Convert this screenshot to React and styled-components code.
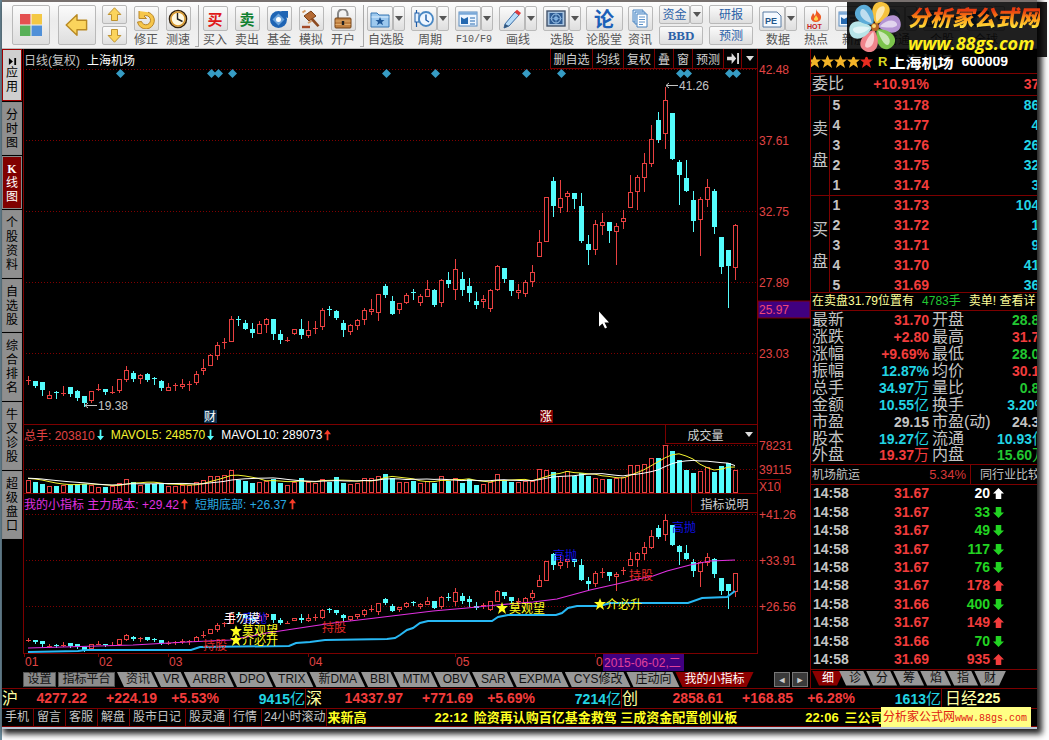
import React from 'react';
import styled, { createGlobalStyle } from 'styled-components';

//
// Global
//

const GlobalStyle = createGlobalStyle`
  * {
    box-sizing: border-box;
  }
  body {
    margin: 0;
    background: #fff;
    font-family: 'Liberation Sans', 'Noto Sans CJK SC', sans-serif;
    font-size: 12px;
  }
  button {
    font: inherit;
    padding: 0;
    margin: 0;
    border: 0;
    white-space: nowrap;
  }
  table {
    border-collapse: collapse;
    table-layout: fixed;
  }
  td, th {
    padding: 0;
    font-weight: normal;
    text-align: left;
    white-space: nowrap;
  }
`;

const line = '#7c0000';
const red = '#f23c3c';
const cyan = '#54fcfc';
const aqua = '#22d4e4';
const green = '#22c832';
const grey = '#c4c4c4';

const Page = styled.div`
  position: relative;
  padding: 0 12px 13px 2px;
  background: linear-gradient(to right, #6d8fa0 0, #6d8fa0 2px, #fff 2px);
  overflow: hidden;
`;

const Frame = styled.div`
  background: #000;
  border-bottom: 2px solid #b9c6d6;
  box-shadow: 3px 3px 6px 2px #222;
`;

// Toolbar

const Toolbar = styled.header`
  display: flex;
  align-items: flex-start;
  height: 49px;
  padding-left: 4px;
  overflow: hidden;
  border-top: 2px solid #77706e;
  border-bottom: 1px solid #bbb;
  background: linear-gradient(#fdfdfd, #ececec 40%, #f1f1f1);
`;

const Grip = styled.span`
  flex: none;
  width: 4px;
  height: 42px;
  margin: 3px 0 0 1px;
  border: 1px solid #aaa;
  border-width: 0 1px 1px 0;
`;

const Tool = styled.div`
  flex: none;
  display: flex;
  flex-direction: column;
  align-items: center;
  width: ${(p) => p.$w || 32}px;
  padding-top: 4px;
  color: #555;
  line-height: 16px;
  white-space: nowrap;
`;

const Face = styled.button`
  display: flex;
  align-items: center;
  justify-content: center;
  flex: none;
  width: ${(p) => p.$w || 25}px;
  height: ${(p) => p.$h || 25}px;
  border: 1px solid #b9b9b9;
  border-radius: 2px;
  background: linear-gradient(#fbfbfb, #dedede);
  color: #2c62a8;
  line-height: 16px;
`;

const Split = styled.span`
  display: flex;
  margin-bottom: 1px;
`;

const Stack = styled.div`
  flex: none;
  display: flex;
  flex-direction: column;
  align-items: center;
  gap: 2px;
  width: ${(p) => p.$w}px;
  padding-top: 3px;
  ${Split} {
    margin: 0;
  }
`;

const Bbd = styled.b`
  font-family: 'Liberation Serif', serif;
  font-size: 13px;
`;

const Stamp = styled.b`
  font-size: ${(p) => p.$s || 15}px;
  font-family: 'Noto Sans CJK SC', sans-serif;
  color: ${(p) => p.$c};
`;

const Mono = styled.span`
  font-family: 'Liberation Mono', monospace;
  font-size: 10px;
`;

// Body

const Body = styled.div`
  display: flex;
`;

const Side = styled.nav`
  flex: none;
  width: 21px;
  display: flex;
  flex-direction: column;
  gap: 1px;
  padding: 0 1px 0 0;
`;

const SideTab = styled.button`
  display: flex;
  flex-direction: column;
  align-items: center;
  justify-content: center;
  height: ${(p) => p.$h}px;
  border: 1px solid ${(p) => (p.$first ? '#a00000' : '#8a8a8a')};
  background: ${(p) => (p.$on ? '#800000' : p.$first ? '#cfcfcf' : '#8f8f8f')};
  color: ${(p) => (p.$on ? '#fff' : '#000')};
  line-height: 14px;
  b {
    font-family: 'Liberation Serif', serif;
  }
`;

const Charts = styled.main`
  flex: 1;
  min-width: 0;
  background: #000;
  > svg {
    display: block;
    width: 100%;
    height: auto;
    overflow: visible;
  }
`;

const Head = styled.div`
  display: flex;
  align-items: center;
  height: 20px;
  margin-right: 52px;
  border: 1px solid ${line};
  border-width: ${(p) => (p.$top ? '1px 1px 0 1px' : '0 1px 0 1px')};
  white-space: nowrap;
  color: ${grey};
`;

const Legend = styled.span`
  display: flex;
  align-items: center;
  gap: 2px;
  margin-right: 7px;
  color: ${(p) => p.$c};
`;

const HeadTools = styled.div`
  display: flex;
  align-self: stretch;
  margin-left: auto;
`;

const HeadButton = styled.button`
  display: flex;
  align-items: center;
  justify-content: center;
  width: ${(p) => p.$w}px;
  background: #000;
  border: 1px solid ${line};
  border-width: 0 0 1px 1px;
  color: #d0d0d0;
  span {
    flex: 1;
  }
  span + svg {
    margin-right: 4px;
  }
`;

// Tabs

const Tabs = styled.div`
  display: flex;
  height: 17px;
  align-items: flex-start;
  padding: 1px 0 0 ${(p) => p.$pad || 0}px;
  overflow: hidden;
`;

const FlatTab = styled.button`
  height: 15px;
  width: ${(p) => p.$w}px;
  margin-right: 2px;
  border: 1px solid #555;
  background: #8c8c8c;
  color: #111;
  line-height: 13px;
`;

const SlantTab = styled.button`
  flex: none;
  height: 15px;
  padding: 0 ${(p) => p.$pad || 9}px;
  margin-right: -5px;
  line-height: 15px;
  background: ${(p) => (p.$on ? '#8c0000' : '#989898')};
  color: ${(p) => (p.$on ? '#fff' : '#111')};
  clip-path: ${(p) => (p.$end
    ? 'polygon(0 0, 100% 0, calc(100% - 7px) 100%, 7px 100%)'
    : 'polygon(0 0, calc(100% - 8px) 0, calc(100% - 1px) 100%, 7px 100%)')};
`;

const Scroll = styled.div`
  display: flex;
  gap: 2px;
  margin-left: auto;
  padding-right: 2px;
`;

const ScrollButton = styled.button`
  width: 16px;
  height: 15px;
  border: 1px solid #777;
  background: #3a3a3a;
  color: #ccc;
  font-size: 9px;
  line-height: 12px;
`;

// Quote panel

const Quote = styled.aside`
  flex: none;
  width: 227px;
  overflow: hidden;
  border-left: 1px solid ${line};
`;

const Title = styled.h1`
  display: flex;
  align-items: center;
  height: 25px;
  margin: 0 0 0 -3px;
  border-bottom: 1px solid ${line};
  color: #fff;
  font-size: 16px;
  white-space: nowrap;
  em {
    margin: 0 2px 0 5px;
    font-size: 13px;
    font-style: normal;
    color: #d8d820;
  }
  span {
    margin-left: 8px;
    font-size: 14px;
  }
`;

const Table = styled.table`
  width: 236px;
  color: ${grey};
  font-size: 16px;
  border-bottom: 1px solid ${line};
  height: ${(p) => (p.$h ? `${p.$h}px` : 'auto')};
  td, th {
    height: ${(p) => p.$row}px;
    line-height: ${(p) => p.$row - 1}px;
  }
`;

const Num = styled.td`
  && {
    text-align: ${(p) => (p.$left ? 'left' : 'right')};
  }
  padding-left: ${(p) => p.$left || 0}px;
  font-size: 14px;
  font-weight: bold;
  color: ${(p) => p.$c || grey};
  span {
    font-size: 15px;
    font-weight: normal;
  }
`;

const SideCell = styled.th`
  border-right: 1px solid ${line};
  vertical-align: middle;
  span {
    display: block;
    height: 32px;
    line-height: 32px;
    padding-left: 1px;
  }
`;

const Group = styled.tbody`
  border-bottom: 1px solid ${line};
`;

const Label = styled.th`
  && {
    padding-left: ${(p) => p.$pad || 1}px;
  }
`;

const Alert = styled.p`
  position: relative;
  display: flex;
  gap: 8px;
  height: 19px;
  margin: -4px 0 0;
  padding-left: 1px;
  border: 1px solid ${line};
  border-width: 1px 0;
  background: #000;
  color: #ffff9a;
  line-height: 17px;
  white-space: nowrap;
  b {
    font-weight: normal;
    color: ${green};
  }
`;

const Sector = styled.div`
  display: flex;
  height: 20px;
  padding-left: 1px;
  border-bottom: 1px solid ${line};
  color: ${grey};
  line-height: 20px;
  white-space: nowrap;
  b {
    margin-left: auto;
    padding-right: 4px;
    font-size: 13px;
    font-weight: normal;
    color: #d83838;
  }
`;

const Peer = styled.a`
  width: 67px;
  padding-left: 9px;
  border-left: 1px solid ${line};
  color: ${grey};
  text-decoration: none;
`;

// Bottom bars

const Indices = styled.div`
  display: grid;
  grid-template-columns: 304fr 316fr 320fr 95fr;
  height: 21px;
  border: 1px solid ${line};
  border-width: 1px 0;
`;

const Index = styled.div`
  display: flex;
  border-right: 1px solid ${line};
  color: ${red};
  font-size: 14px;
  font-weight: bold;
  line-height: 19px;
  text-align: right;
  white-space: nowrap;
  overflow: hidden;
  &:last-child {
    border: 0;
    padding-left: 3px;
    color: #ffffa0;
  }
`;

const IndexName = styled.span`
  color: #ffffa0;
  font-size: 16px;
  font-weight: normal;
`;

const Cell = styled.span`
  flex: ${(p) => (p.$w ? 'none' : 1)};
  width: ${(p) => (p.$w ? `${p.$w}px` : 'auto')};
  color: ${(p) => p.$c || red};
  i {
    font-size: 15px;
    font-style: normal;
    font-weight: normal;
  }
`;

const News = styled.div`
  display: flex;
  height: 18px;
  border-bottom: 1px solid ${line};
  overflow: hidden;
`;

const Link = styled.a`
  flex: none;
  padding: 0 4px 0 3px;
  border-right: 1px solid ${line};
  color: ${grey};
  line-height: 17px;
  text-decoration: none;
  white-space: nowrap;
  &:last-of-type {
    padding: 0 1px 0 2px;
  }
`;

const Ticker = styled.div`
  display: flex;
  gap: 68px;
  color: #ffff20;
  font-size: 13px;
  font-weight: bold;
  line-height: 17px;
  white-space: nowrap;
  time {
    margin-right: 6px;
  }
`;

// Floating over the window

const Watermark = styled.div`
  position: absolute;
  top: 2px;
  right: 2px;
  display: flex;
  width: 200px;
  height: 55px;
  background: rgba(0, 0, 0, 0.87);
  svg {
    flex: none;
  }
`;

const Brand = styled.div`
  display: flex;
  flex-direction: column;
  padding: 3px 0 0 5px;
  font-style: italic;
  font-weight: bold;
  white-space: nowrap;
  strong {
    font-size: 22px;
    line-height: 28px;
    background: linear-gradient(#e83c10 20%, #ff9a18 50%, #ffe23c 80%);
    background-clip: text;
    color: transparent;
  }
  span {
    font-family: 'Open Sans', sans-serif;
    font-size: 18px;
    line-height: 20px;
    color: #fff01c;
  }
`;

const Promo = styled.a`
  position: absolute;
  right: 18px;
  bottom: 15px;
  width: 150px;
  height: 20px;
  padding-left: 2px;
  background: #ffff84;
  color: #e02010;
  font-size: 12px;
  line-height: 20px;
  text-decoration: none;
  white-space: nowrap;
`;

// Data

// up, high, body top, body bottom, low, volume
const candles = [
  [1, 376, 380, 380, 384, 12], [0, 381, 381, 386, 387, 11], [0, 382, 382, 390, 395, 9],
  [1, 391, 395, 398, 398, 6], [0, 391, 392, 393, 398, 7], [1, 386, 393, 393, 395, 7],
  [0, 387, 387, 394, 396, 8], [0, 390, 391, 398, 400, 9], [0, 396, 396, 403, 406, 9],
  [1, 391, 391, 400, 402, 7], [1, 384, 389, 389, 390, 5], [0, 389, 389, 392, 394, 6],
  [1, 386, 392, 392, 393, 6], [1, 379, 379, 390, 392, 9], [1, 366, 370, 379, 381, 13],
  [0, 371, 373, 379, 381, 11], [1, 374, 375, 378, 383, 7], [0, 373, 374, 380, 381, 9],
  [0, 377, 378, 379, 384, 9], [0, 380, 381, 388, 390, 9], [1, 383, 387, 390, 390, 6],
  [1, 383, 385, 385, 390, 6], [1, 379, 384, 386, 388, 7], [1, 381, 384, 384, 390, 7],
  [1, 371, 374, 382, 384, 10], [1, 359, 368, 370, 374, 12], [1, 354, 355, 365, 365, 16],
  [1, 342, 345, 355, 359, 16], [1, 338, 342, 342, 348, 17], [1, 316, 319, 341, 341, 22],
  [0, 316, 319, 320, 325, 13], [0, 320, 323, 329, 329, 12], [0, 323, 329, 333, 337, 10],
  [1, 321, 324, 333, 333, 10], [1, 318, 319, 324, 332, 11], [0, 319, 319, 334, 339, 14],
  [0, 330, 334, 340, 343, 10], [1, 337, 340, 340, 341, 7], [1, 329, 329, 333, 334, 10],
  [0, 319, 329, 335, 338, 15], [1, 321, 330, 335, 337, 10], [1, 321, 328, 328, 333, 9],
  [1, 308, 310, 326, 329, 13], [0, 306, 309, 310, 315, 11], [0, 310, 311, 318, 319, 16],
  [0, 320, 323, 330, 336, 10], [1, 324, 325, 331, 334, 8], [1, 319, 320, 325, 329, 9],
  [1, 308, 310, 319, 324, 14], [1, 299, 309, 311, 314, 14], [1, 294, 294, 312, 320, 16],
  [0, 284, 286, 295, 297, 19], [0, 296, 301, 314, 314, 15], [1, 303, 303, 309, 313, 10],
  [1, 293, 295, 302, 303, 10], [0, 289, 292, 293, 299, 12], [1, 294, 296, 302, 305, 9],
  [1, 280, 289, 296, 296, 11], [0, 289, 290, 305, 306, 10], [1, 279, 280, 302, 306, 16],
  [0, 272, 280, 284, 287, 12], [1, 259, 269, 289, 299, 14], [0, 272, 279, 290, 295, 10],
  [0, 278, 286, 293, 301, 14], [0, 292, 301, 305, 308, 8], [1, 295, 299, 301, 307, 8],
  [1, 289, 290, 308, 311, 10], [1, 265, 266, 289, 290, 18], [0, 268, 268, 279, 282, 13],
  [0, 280, 280, 291, 295, 11], [1, 284, 290, 292, 298, 10], [1, 280, 282, 293, 296, 11],
  [1, 265, 272, 281, 286, 11], [1, 230, 242, 256, 256, 23], [1, 197, 197, 241, 241, 22],
  [0, 177, 181, 206, 216, 21], [1, 180, 198, 207, 212, 16], [1, 191, 193, 196, 211, 21],
  [0, 193, 193, 199, 208, 17], [0, 193, 206, 241, 242, 20], [0, 235, 244, 250, 264, 17],
  [1, 220, 224, 249, 254, 14], [1, 213, 222, 225, 234, 13], [0, 222, 222, 231, 242, 14],
  [1, 223, 226, 231, 264, 14], [1, 210, 218, 221, 228, 15], [1, 175, 192, 207, 207, 27],
  [1, 175, 177, 191, 209, 27], [1, 153, 163, 177, 191, 28], [1, 125, 139, 163, 166, 34],
  [0, 112, 120, 140, 142, 35], [1, 87, 100, 133, 148, 47], [0, 113, 113, 159, 159, 42],
  [0, 160, 162, 175, 204, 33], [0, 160, 178, 191, 191, 23], [0, 191, 200, 221, 231, 20],
  [1, 197, 199, 219, 255, 21], [1, 179, 187, 199, 206, 25], [0, 189, 191, 227, 233, 21],
  [0, 237, 237, 267, 273, 27], [0, 250, 250, 266, 307, 30], [1, 224, 225, 267, 279, 22],
];

const events = [120, 211, 218, 232, 386, 435, 526, 561, 680, 687, 729, 736];

const sideTabs = [
  ['分时图', 53], ['K线图', 53], ['个股资料', 68], ['自选股', 53],
  ['综合排名', 68], ['牛叉诊股', 68], ['超级盘口', 68],
];

const sells = [['5', '31.78', '865'], ['4', '31.77', '41'], ['3', '31.76', '262'], ['2', '31.75', '325'], ['1', '31.74', '35']];
const buys = [['1', '31.73', '1042'], ['2', '31.72', '15'], ['3', '31.71', '95'], ['4', '31.70', '412'], ['5', '31.69', '365']];

const stats = [
  ['最新', '31.70', '', red, '开盘', '28.80', '', green],
  ['涨跌', '+2.80', '', red, '最高', '31.79', '', red],
  ['涨幅', '+9.69%', '', red, '最低', '28.00', '', green],
  ['振幅', '12.87%', '', aqua, '均价', '30.17', '', red],
  ['总手', '34.97', '万', aqua, '量比', '0.86', '', green],
  ['金额', '10.55', '亿', aqua, '换手', '3.20%', '', aqua],
  ['市盈', '29.15', '', grey, '市盈(动)', '24.35', '', grey],
  ['股本', '19.27', '亿', aqua, '流通', '10.93', '亿', aqua],
  ['外盘', '19.37', '万', red, '内盘', '15.60', '万', green],
];

const ticks = [
  ['31.67', 20, 'even'], ['31.67', 33, 'down'], ['31.67', 49, 'down'], ['31.67', 117, 'down'],
  ['31.67', 76, 'down'], ['31.67', 178, 'up'], ['31.66', 400, 'down'], ['31.67', 149, 'up'],
  ['31.66', 70, 'down'], ['31.69', 935, 'up'],
];
const tickColor = { even: '#fff', down: '#22d422', up: red };

const indicators = ['资讯', 'VR', 'ARBR', 'DPO', 'TRIX', '新DMA', 'BBI', 'MTM', 'OBV', 'SAR', 'EXPMA', 'CYS修改', '庄动向'];

const indices = [
  ['沪', '4277.22', '+224.19', '+5.53%', '9415'],
  ['深', '14337.97', '+771.69', '+5.69%', '7214'],
  ['创', '2858.61', '+168.85', '+6.28%', '1613'],
];

const links = ['手机', '留言', '客服', '解盘', '股市日记', '股灵通', '行情', '24小时滚动'];

// Icons

const Svg = ({ s = 20, children, ...rest }) => (
  <svg width={s} height={s} viewBox="0 0 20 20" aria-hidden="true" {...rest}>{children}</svg>
);

const Caret = ({ c = '#555' }) => (
  <svg width="8" height="5" viewBox="0 0 8 5" aria-hidden="true"><path d="M0 0h8L4 5z" fill={c} /></svg>
);

const Thin = ({ up, c }) => (
  <svg width="7" height="12" viewBox="0 0 8 12" aria-hidden="true">
    <path d={up ? 'M4 0L8 5H5V12H3V5H0z' : 'M4 12L8 7H5V0H3V7H0z'} fill={c} />
  </svg>
);

const GoldArrow = ({ turn, s }) => (
  <Svg s={s}>
    <path transform={`rotate(${turn} 10 10)`} d="M10 1L18.500 10H14V18H6V10H1.500z" fill="#fbd45c" stroke="#b98a24" strokeWidth="1.200" strokeLinejoin="round" />
  </Svg>
);

const icons = {
  fix: <><path d="M3 2v7.500h7.500L8 7a4.600 4.600 0 1 1-2.500 5.500L1.500 13A8.500 8.500 0 1 0 12 3.200" fill="#f6c64a" stroke="#b8862a" strokeLinejoin="round" /></>,
  clock: <><circle cx="10" cy="10" r="8.500" fill="#fff8e0" stroke="#33210c" strokeWidth="1.600" /><circle cx="10" cy="10" r="7" fill="none" stroke="#d8982c" strokeWidth="1.500" /><path d="M9.500 4v6l5 2.500" fill="none" stroke="#222" strokeWidth="1.400" /></>,
  fund: <><circle cx="9.500" cy="10.500" r="8.500" fill="#1e64b4" /><path d="M12 2h7v7l-3-1z" fill="#1e64b4" /><path d="M9.500 4.500l3 3 3 3-6 6-6-6z" fill="#6ca4dc" /><circle cx="9.500" cy="10.500" r="2.500" fill="#fff" /></>,
  gavel: <><path d="M3 7l7-5 5 5-7 5z" fill="#b46a34" stroke="#7a4018" /><path d="M11.500 8.500l7 8-2 1.500-7-7.500z" fill="#8c4a20" /><path d="M1.500 3.500l3-2M7 14l3.500-2" stroke="#d49a64" strokeWidth="2" /><path d="M1 18h8" stroke="#a44a28" strokeWidth="2.400" /></>,
  lock: <><path d="M5 10V5.500a4.500 4.500 0 0 1 9.500-1V7" fill="none" stroke="#888" strokeWidth="2" /><rect x="2" y="9" width="16" height="10" rx="1" fill="#c08040" stroke="#74441a" /><path d="M2.500 12h15M2.500 15.500h15" stroke="#e0ac6c" /><path d="M10 12v4" stroke="#222" strokeWidth="2.400" /></>,
  folder: <><path d="M1 4h6l2 2h10v12H1z" fill="#9cc8ee" stroke="#3a78b4" /><path d="M1.500 8h17" stroke="#dff0ff" /><path d="M10 8l1.300 3h3.200l-2.500 2 1 3.200-3-1.900-3 1.900 1-3.200-2.500-2h3.200z" fill="#205898" /></>,
  period: <><path d="M2.500 1v17" stroke="#1c5ca8" strokeWidth="1.200" /><rect x="1" y="4" width="4" height="9" fill="#e4f2ff" stroke="#1c5ca8" /><circle cx="12" cy="10" r="7" fill="#eef6ff" stroke="#4a88c4" strokeWidth="1.800" /><path d="M12 5.500V11l3 2" fill="none" stroke="#1c5ca8" strokeWidth="1.400" /></>,
  info: <><rect x="1" y="3" width="18" height="14" fill="#eef6ff" stroke="#5a8cc0" /><path d="M1 4.500h18" stroke="#7aa8d8" strokeWidth="2.500" /><path d="M3 8l3 2 4-2v7H3z" fill="#2468b0" /><path d="M12 9h5M12 12h5M12 15h5" stroke="#2468b0" strokeWidth="1.200" /></>,
  pen: <><path d="M3 15L13 3l4 3L7 17l-5 2z" fill="#b8dcf8" stroke="#3a6ca4" strokeLinejoin="round" /><path d="M12.500 3L15 .8 19 4l-2 2.500z" fill="#e03a3a" /><path d="M2 19l1-4 4 2z" fill="#33567c" /></>,
  pick: <><rect x="1" y="2" width="18" height="15" fill="#a8c4e0" stroke="#44546c" strokeWidth="1.400" /><rect x="3.500" y="4" width="13" height="11" fill="#2e5c94" /><circle cx="10" cy="9.500" r="4.500" fill="none" stroke="#a8d0f4" /><circle cx="10" cy="9.500" r="2" fill="#8cc0f0" /><path d="M10 4v11M3.500 9.500h13" stroke="#7ca8d4" strokeWidth=".7" /></>,
  docs: <><path d="M3 1h10v12H3z" fill="#d8eafb" stroke="#4a84c0" /><path d="M5 3h10v12H5z" fill="#d8eafb" stroke="#4a84c0" /><path d="M7 5h10v13H7z" fill="#fff" stroke="#4a84c0" /><path d="M9 8h6M9 10.500h6M9 13h6M9 15.500h4" stroke="#5a90c8" /></>,
  hot: <><path d="M10 0c1 4 6 5 5 9-.4 2.500-2.500 4-5 4s-5-1.500-5-4c0-2 1.500-3 2-5 1 1 1.500 2 1.500 3C10 5 10.500 2.500 10 0z" fill="#ee5a24" /><path d="M10 6c.5 2 2.500 2.500 2 4.500-.3 1.500-3.700 1.500-4 0C7.700 9 9.500 8 10 6z" fill="#ffd34c" /></>,
};

const ToolButton = ({ label, icon, w, split, mono, children }) => (
  <Tool $w={w || (split ? 44 : 32)}>
    <Split>
      <Face $w={split ? 26 : w ? w - 3 : 25} aria-label={label}>{children || <Svg>{icons[icon]}</Svg>}</Face>
      {split && <Face $w={12} aria-label={`${label} ▾`}><Caret /></Face>}
    </Split>
    {mono ? <Mono>{label}</Mono> : label}
  </Tool>
);

const Star = ({ c = '#f4b428' }) => (
  <Svg s={13}><path d="M10 0l3 7h7l-5.500 4.500L17 20l-7-5-7 5 2.500-8.500L0 7h7z" fill={c} /></Svg>
);

// Charts

const Candles = ({ map = (y) => y }) => (
  <g shapeRendering="crispEdges">
    {candles.map(([up, hi, top, bot, lo], i) => {
      const x = 28 + i * 7;
      const c = up ? '#e84040' : cyan;
      const [h, t, b, l] = [hi, top, bot, lo].map((y) => Math.round(map(y)));
      return (
        <g key={x} fill={c}>
          <rect x={x} y={h} width="1" height={Math.max(t - h, 0)} />
          <rect x={x} y={b} width="1" height={Math.max(l - b, 0) + 1} />
          {up && b - t > 1
            ? <rect x={x - 1.5} y={t + 0.5} width="4" height={b - t} fill="#000" stroke={c} />
            : <rect x={x - 2} y={t} width="5" height={Math.max(b - t, 1)} />}
        </g>
      );
    })}
  </g>
);

const Grid = ({ rows }) => rows.map(([y, text]) => (
  <g key={y}>
    <path d={`M26 ${y}.5H757`} stroke="#800000" strokeDasharray="1 2" shapeRendering="crispEdges" />
    <text x="759" y={y + 5} fill="#e04444">{text}</text>
  </g>
));

const average = (n) => {
  const all = [...Array(n - 1).fill(14), ...candles.map((c) => c[5])];
  return candles.map((c, i) => {
    const sum = all.slice(i, i + n).reduce((a, b) => a + b, 0);
    return `${28 + i * 7},${492 - sum / n}`;
  }).join(' ');
};

const Frames = ({ d }) => <path d={d} fill="none" stroke={line} shapeRendering="crispEdges" />;

const PriceChart = () => (
  <svg viewBox="23 69 787 355" fontSize="12">
    <Frames d="M757.500 69V424M23.500 69V424" />
    <Grid rows={[[69, '42.48'], [140, '37.61'], [211, '32.75'], [282, '27.89'], [353, '23.03']]} />
    {events.map((x) => <path key={x} d={`M${x - 4} 73.500l4.500-4.500 4.500 4.500-4.500 4.500z`} fill="#369cc4" />)}
    <Candles />
    <path d="M666 85.500h12M669 83l-3 2.500 3 2.500M85 405.500h12M88 403l-3 2.500 3 2.500" stroke={grey} fill="none" />
    <text x="679" y="90" fill={grey}>41.26</text>
    <text x="98" y="410" fill={grey}>19.38</text>
    <rect x="204" y="410" width="13" height="13" fill="#0c3050" />
    <text x="204" y="421" fill="#fff">财</text>
    <rect x="540" y="410" width="13" height="13" fill="#800000" />
    <text x="540" y="421" fill="#fff">涨</text>
    <rect x="758" y="301" width="52" height="17" fill="#400080" stroke={line} />
    <text x="759" y="314" fill="#f04878">25.97</text>
    <path d="M599 311.500v15l3.500-3 2.500 5 2-1-2.500-5h4.500z" fill="#fff" />
  </svg>
);

const VolumeChart = () => (
  <svg viewBox="23 444 787 49" fontSize="12">
    <Frames d="M757.500 444V493M23.500 444V493M757 479.500H780V493" />
    <Grid rows={[[445, '78231'], [469, '39115']]} />
    <g shapeRendering="crispEdges">
      {candles.map(([up, , , , , v], i) => (up
        ? <rect key={i} x={26.5 + i * 7} y={492.5 - v} width="4" height={v} fill="#000" stroke="#e84040" />
        : <rect key={i} x={26 + i * 7} y={493 - v} width="5" height={v} fill={cyan} />))}
    </g>
    <polyline points={average(5)} fill="none" stroke="#f4f430" />
    <polyline points={average(10)} fill="none" stroke="#fff" />
    <text x="759" y="491" fill="#e04444">X10</text>
  </svg>
);

const months = [[24, '01'], [98, '02'], [168, '03'], [308, '04'], [455, '05'], [595, '0']];
const notes = [
  [203, 650, '持股', '#e02828'], [322, 632, '持股', '#e02828'], [629, 580, '持股', '#e02828'],
  [553, 560, '高抛', '#1010e0'], [672, 532, '高抛', '#1010e0'], [243, 623, '高抛', '#1010e0'],
  [224, 623, '手勿摸', '#fff'], [242, 635, '莫观望', '#ffff20'], [242, 645, '介必升', '#ffff20'],
  [509, 613, '莫观望', '#ffff20'], [606, 609, '介必升', '#ffff20'],
];
const noteStars = [[236, 631], [236, 640], [502, 608], [600, 604]];

const IndicatorChart = () => (
  <svg viewBox="23 513 787 158" fontSize="12">
    <Frames d="M757.500 513V653M23.500 513V653M23 653.500H758" />
    <Grid rows={[[514, '+41.26'], [560, '+33.91'], [606, '+26.56']]} />
    <Candles map={(y) => 606 + (y - 301.5) * 0.4286} />
    <polyline fill="none" stroke="#e030e0" strokeWidth="1.200" points="28,648 133,645 187,642 230,640 267,633 293,629 333,623 367,619 400,615 433,611 467,608 497,605 533,602 557,599 590,590 617,584 633,580 653,576 667,571 690,565 710,561 735,560" />
    <polyline fill="none" stroke="#28b8f4" strokeWidth="2" points="28,652 78,651 85,650 191,650 200,647 289,646 296,643 310,642 325,640 387,639 395,638 400,635 407,630 413,628 420,623 428,621 492,621 498,617 508,615 556,615 562,613 568,608 577,606 600,606 610,603 688,603 702,598 727,597 735,591" />
    {notes.map(([x, y, text, c]) => <text key={`${x}-${y}`} x={x} y={y} fill={c}>{text}</text>)}
    {noteStars.map(([x, y]) => (
      <path key={`${x}-${y}`} transform={`translate(${x} ${y})`} d="M0-6l1.500 4H6L2.500 1 4 6 0 3-4 6-2.500 1-6-2h4.500z" fill="#ffff20" />
    ))}
    {months.map(([x, text]) => (
      <g key={x}>
        <Frames d={`M${x}.500 653v4`} />
        <text x={x + 1} y="666" fill="#e04444">{text}</text>
      </g>
    ))}
    <rect x="603" y="654" width="81" height="17" fill="#400080" />
    <text x="604" y="667" fill="#e0409c">2015-06-02,二</text>
  </svg>
);

const petals = ['#f6c23c', '#b494d4', '#7cc44c', '#f0848c', '#b8e4e8', '#5cacd8'];

const Flower = () => (
  <svg width="56" height="55" viewBox="0 0 56 55" aria-hidden="true">
    {petals.map((c, i) => (
      <g key={c} transform={`translate(28 25) rotate(${20 + i * 60})`}>
        <path d="M0-3C-12-12-11-26 0-26S12-12 0-3z" fill={c} />
        <path d="M0-5C-5-12-5-20 0-22S4-12 0-5z" fill="#fff" opacity=".6" />
      </g>
    ))}
    <circle cx="28" cy="25" r="4" fill="#b86424" />
    <circle cx="27" cy="24" r="2" fill="#f8d870" />
  </svg>
);

const BookRows = ({ name, rows }) => (
  <Group>
    {rows.map(([level, price, amount], i) => (
      <tr key={level}>
        {i === 0 && <SideCell rowSpan={5}>{name.split('').map((c) => <span key={c}>{c}</span>)}</SideCell>}
        <Num $left={3}>{level}</Num>
        <Num $c={red}>{price}</Num>
        <Num $c={aqua}>{amount}</Num>
      </tr>
    ))}
  </Group>
);

const App = () => (
  <Page>
    <GlobalStyle />
    <Frame>
      <Toolbar>
        <Stack $w={50}>
          <Face $w={38} $h={40} aria-label="主页">
            <Svg s={22}>
              <path d="M0 0h9.500v9.500H0z" fill="#e45050" /><path d="M10.500 0H20v9.500h-9.500z" fill="#f4c844" />
              <path d="M0 10.500h9.500V20H0z" fill="#58b058" /><path d="M10.500 10.500H20V20h-9.500z" fill="#5090d8" />
            </Svg>
          </Face>
        </Stack>
        <Stack $w={42}><Face $w={38} $h={40} aria-label="返回"><GoldArrow turn={-90} s={24} /></Face></Stack>
        <Stack $w={32}>
          <Face $h={19} aria-label="上"><GoldArrow turn={0} s={15} /></Face>
          <Face $h={19} aria-label="下"><GoldArrow turn={180} s={15} /></Face>
        </Stack>
        <ToolButton label="修正" icon="fix" />
        <ToolButton label="测速" icon="clock" />
        <Grip />
        <ToolButton label="买入"><Stamp $c="#e01818">买</Stamp></ToolButton>
        <ToolButton label="卖出"><Stamp $c="#108030">卖</Stamp></ToolButton>
        <ToolButton label="基金" icon="fund" />
        <ToolButton label="模拟" icon="gavel" />
        <ToolButton label="开户" icon="lock" />
        <Grip />
        <ToolButton label="自选股" icon="folder" split />
        <ToolButton label="周期" icon="period" split />
        <ToolButton label="F10/F9" icon="info" split mono />
        <ToolButton label="画线" icon="pen" split />
        <ToolButton label="选股" icon="pick" split />
        <ToolButton label="论股堂" w={40}><Stamp $c="#1c60b8" $s={20}>论</Stamp></ToolButton>
        <ToolButton label="资讯" icon="docs" />
        <Stack $w={50}>
          <Split><Face $w={31} $h={19}>资金</Face><Face $w={13} $h={19} aria-label="资金 ▾"><Caret /></Face></Split>
          <Face $w={44} $h={19}><Bbd>BBD</Bbd></Face>
        </Stack>
        <Stack $w={50}>
          <Face $w={44} $h={19}>研报</Face>
          <Face $w={44} $h={19}>预测</Face>
        </Stack>
        <ToolButton label="数据" split>
          <Svg><path d="M1 3h14l4 4v11H1z" fill="#f4f9ff" stroke="#5a7ca4" /><text x="3" y="14.500" fontSize="9" fontWeight="bold" fill="#24588c">PE</text></Svg>
        </ToolButton>
        <ToolButton label="热点">
          <Svg>{icons.hot}<text x="1" y="20" fontSize="7" fontWeight="bold" fill="#c81c1c">HOT</text></Svg>
        </ToolButton>
        <ToolButton label="新股" icon="info" split />
        <ToolButton label="普通" icon="docs" split />
        <ToolButton label="个股" icon="pick" split />
        <ToolButton label="全球" icon="fund" split />
      </Toolbar>

      <Body>
        <Side>
          <SideTab $h={52} $first>
            <Svg s={9}><path d="M2 2l9 8-9 8zM14 2h4v16h-4z" /></Svg>
            <span>应</span><span>用</span>
          </SideTab>
          {sideTabs.map(([name, h]) => (
            <SideTab key={name} $h={h} $on={name === 'K线图'}>
              {name.split('').map((c) => (c === 'K' ? <b key={c}>{c}</b> : <span key={c}>{c}</span>))}
            </SideTab>
          ))}
        </Side>

        <Charts>
          <Head>
            <Legend $c={grey}>日线(复权)</Legend>
            <Legend $c="#fff">上海机场</Legend>
            <HeadTools>
              <HeadButton $w={42}>删自选</HeadButton>
              <HeadButton $w={31}>均线</HeadButton>
              <HeadButton $w={31}>复权</HeadButton>
              <HeadButton $w={19}>叠</HeadButton>
              <HeadButton $w={19}>窗</HeadButton>
              <HeadButton $w={31}>预测</HeadButton>
              <HeadButton $w={18} aria-label="末页">
                <svg width="12" height="11" viewBox="0 0 13 12"><path d="M0 4h5V0l5 6-5 6V8H0zM11 0h2v12h-2z" fill="#ddd" /></svg>
              </HeadButton>
              <HeadButton $w={16} aria-label="菜单"><Caret c="#ddd" /></HeadButton>
            </HeadTools>
          </Head>
          <PriceChart />

          <Head $top>
            <Legend $c="#e04444">总手: 203810<Thin c={cyan} /></Legend>
            <Legend $c="#f4f430">MAVOL5: 248570<Thin c={cyan} /></Legend>
            <Legend $c="#fff">MAVOL10: 289073<Thin up c="#f83c28" /></Legend>
            <HeadTools>
              <HeadButton $w={92}><span>成交量</span><Caret c="#ddd" /></HeadButton>
            </HeadTools>
          </Head>
          <VolumeChart />

          <Head $top>
            <Legend $c="#e030e0">我的小指标 主力成本: +29.42<Thin up c="#f83c28" /></Legend>
            <Legend $c="#28a8e0">短期底部: +26.37<Thin up c="#f83c28" /></Legend>
            <HeadTools><HeadButton $w={66}>指标说明</HeadButton></HeadTools>
          </Head>
          <IndicatorChart />

          <Tabs>
            <FlatTab $w={33}>设置</FlatTab>
            <FlatTab $w={57}>指标平台</FlatTab>
            {indicators.map((name) => <SlantTab key={name}>{name}</SlantTab>)}
            <SlantTab $on $end>我的小指标</SlantTab>
            <Scroll>
              <ScrollButton aria-label="左">◄</ScrollButton>
              <ScrollButton aria-label="右">►</ScrollButton>
            </Scroll>
          </Tabs>
        </Charts>

        <Quote>
          <Title>
            <Star /><Star /><Star /><Star /><Star c="#e82c20" />
            <em>R</em>上海机场<span>600009</span>
          </Title>
          <Table $row={21}>
            <colgroup><col width="48" /><col width="70" /><col width="118" /></colgroup>
            <tbody>
              <tr><Label>委比</Label><Num $c={red}>+10.91%</Num><Num $c={red}>374</Num></tr>
            </tbody>
          </Table>
          <Table $row={20}>
            <colgroup><col width="18" /><col width="30" /><col width="70" /><col width="118" /></colgroup>
            <BookRows name="卖盘" rows={sells} />
            <BookRows name="买盘" rows={buys} />
          </Table>
          <Alert><span>在卖盘31.79位置有</span><b>4783手</b><span>卖单! 查看详</span></Alert>
          <Table $row={17}>
            <colgroup><col width="40" /><col width="78" /><col width="60" /><col width="58" /></colgroup>
            <tbody>
              {stats.map(([a, v, u, c, b, w, x, d]) => (
                <tr key={a}>
                  <Label>{a}</Label>
                  <Num $c={c}>{v}<span>{u}</span></Num>
                  <Label $pad={3}>{b}</Label>
                  <Num $c={d}>{w}<span>{x}</span></Num>
                </tr>
              ))}
            </tbody>
          </Table>
          <Sector><span>机场航运</span><b>5.34%</b><Peer href="#peer">同行业比较</Peer></Sector>
          <Table $row={18} $h={185}>
            <colgroup><col width="48" /><col width="70" /><col width="61" /><col width="57" /></colgroup>
            <tbody>
              {ticks.map(([price, n, dir], i) => (
                <tr key={i}>
                  <Num $left={2}>14:58</Num>
                  <Num $c={red}>{price}</Num>
                  <Num $c={tickColor[dir]}>{n}</Num>
                  <Label $pad={3}>
                    <Svg s={11}><path d={dir === 'down' ? 'M10 20L0 10H5V0H15V10H20z' : 'M10 0L20 10H15V20H5V10H0z'} fill={tickColor[dir]} /></Svg>
                  </Label>
                </tr>
              ))}
            </tbody>
          </Table>
          <Tabs $pad={1}>
            <SlantTab $on $end $pad={10}>细</SlantTab>
            {'诊分筹焰指财'.split('').map((c) => <SlantTab key={c} $end={c === '财'} $pad={10}>{c}</SlantTab>)}
          </Tabs>
        </Quote>
      </Body>

      <Indices>
        {indices.map(([name, value, change, pct, amount]) => (
          <Index key={name}>
            <IndexName>{name}</IndexName>
            <Cell>{value}</Cell>
            <Cell $w={70}>{change}</Cell>
            <Cell $w={62}>{pct}</Cell>
            <Cell $w={86} $c={aqua}>{amount}<i>亿</i></Cell>
          </Index>
        ))}
        <Index><IndexName>日经</IndexName>225</Index>
      </Indices>
      <News>
        {links.map((name) => <Link key={name} href="#news">{name}</Link>)}
        <Ticker>
          <span>来新高</span>
          <span><time>22:12</time>险资再认购百亿基金救驾 三成资金配置创业板</span>
          <span><time>22:06</time>三公司</span>
        </Ticker>
      </News>
    </Frame>
    <Watermark>
      <Flower />
      <Brand><strong>分析家公式网</strong><span>www.88gs.com</span></Brand>
    </Watermark>
    <Promo href="#promo">分析家公式网<Mono>www.88gs.com</Mono></Promo>
  </Page>
);

export default App;
